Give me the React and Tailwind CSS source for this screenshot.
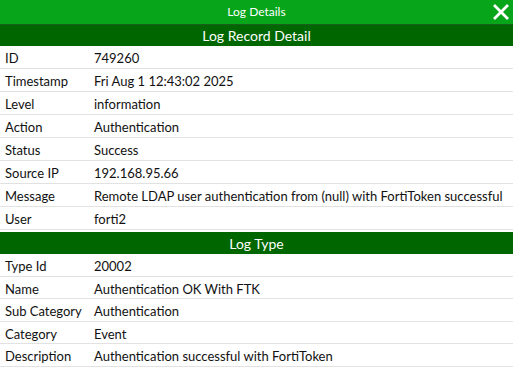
import React from "react";

const record = [
  ["ID", "749260"],
  ["Timestamp", "Fri Aug 1 12:43:02 2025"],
  ["Level", "information"],
  ["Action", "Authentication"],
  ["Status", "Success"],
  ["Source IP", "192.168.95.66"],
  ["Message", "Remote LDAP user authentication from (null) with FortiToken successful"],
  ["User", "forti2"],
];

const logType = [
  ["Type Id", "20002"],
  ["Name", "Authentication OK With FTK"],
  ["Sub Category", "Authentication"],
  ["Category", "Event"],
  ["Description", "Authentication successful with FortiToken"],
];

function Row({ label, value, h }) {
  return (
    <div className={`flex ${h} items-center border-b border-[#e2e2e2] pt-[4px] text-[13px] text-[#111]`}>
      <div className="w-[94px] shrink-0 pl-[5px]">{label}</div>
      <div className="whitespace-nowrap">{value}</div>
    </div>
  );
}

export default function App() {
  return (
    <div className="w-[513px] h-[371px] overflow-hidden bg-white" style={{ fontFamily: "Lato, 'Noto Sans', sans-serif" }}>
      <div className="relative flex h-[24px] items-center justify-center bg-[#07a51a] text-[12px] text-white">
        Log Details
        <svg className="absolute right-[4px] top-[4px]" width="16" height="16" viewBox="0 0 16 16">
          <path d="M2 2 L14 14 M14 2 L2 14" stroke="white" strokeWidth="2.8" strokeLinecap="square" />
        </svg>
      </div>
      <div className="h-px bg-[#1b5e1b]" />
      <div className="flex h-[21px] items-center justify-center bg-[#006600] text-[14px] text-white">
        Log Record Detail
      </div>
      {record.map(([l, v]) => (
        <Row key={l} label={l} value={v} h="h-[23px]" />
      ))}
      <div className="mt-[2px] flex h-[22px] items-center justify-center bg-[#006600] text-[14px] text-white">
        Log Type
      </div>
      {logType.map(([l, v]) => (
        <Row key={l} label={l} value={v} h="h-[22.5px]" />
      ))}
    </div>
  );
}
